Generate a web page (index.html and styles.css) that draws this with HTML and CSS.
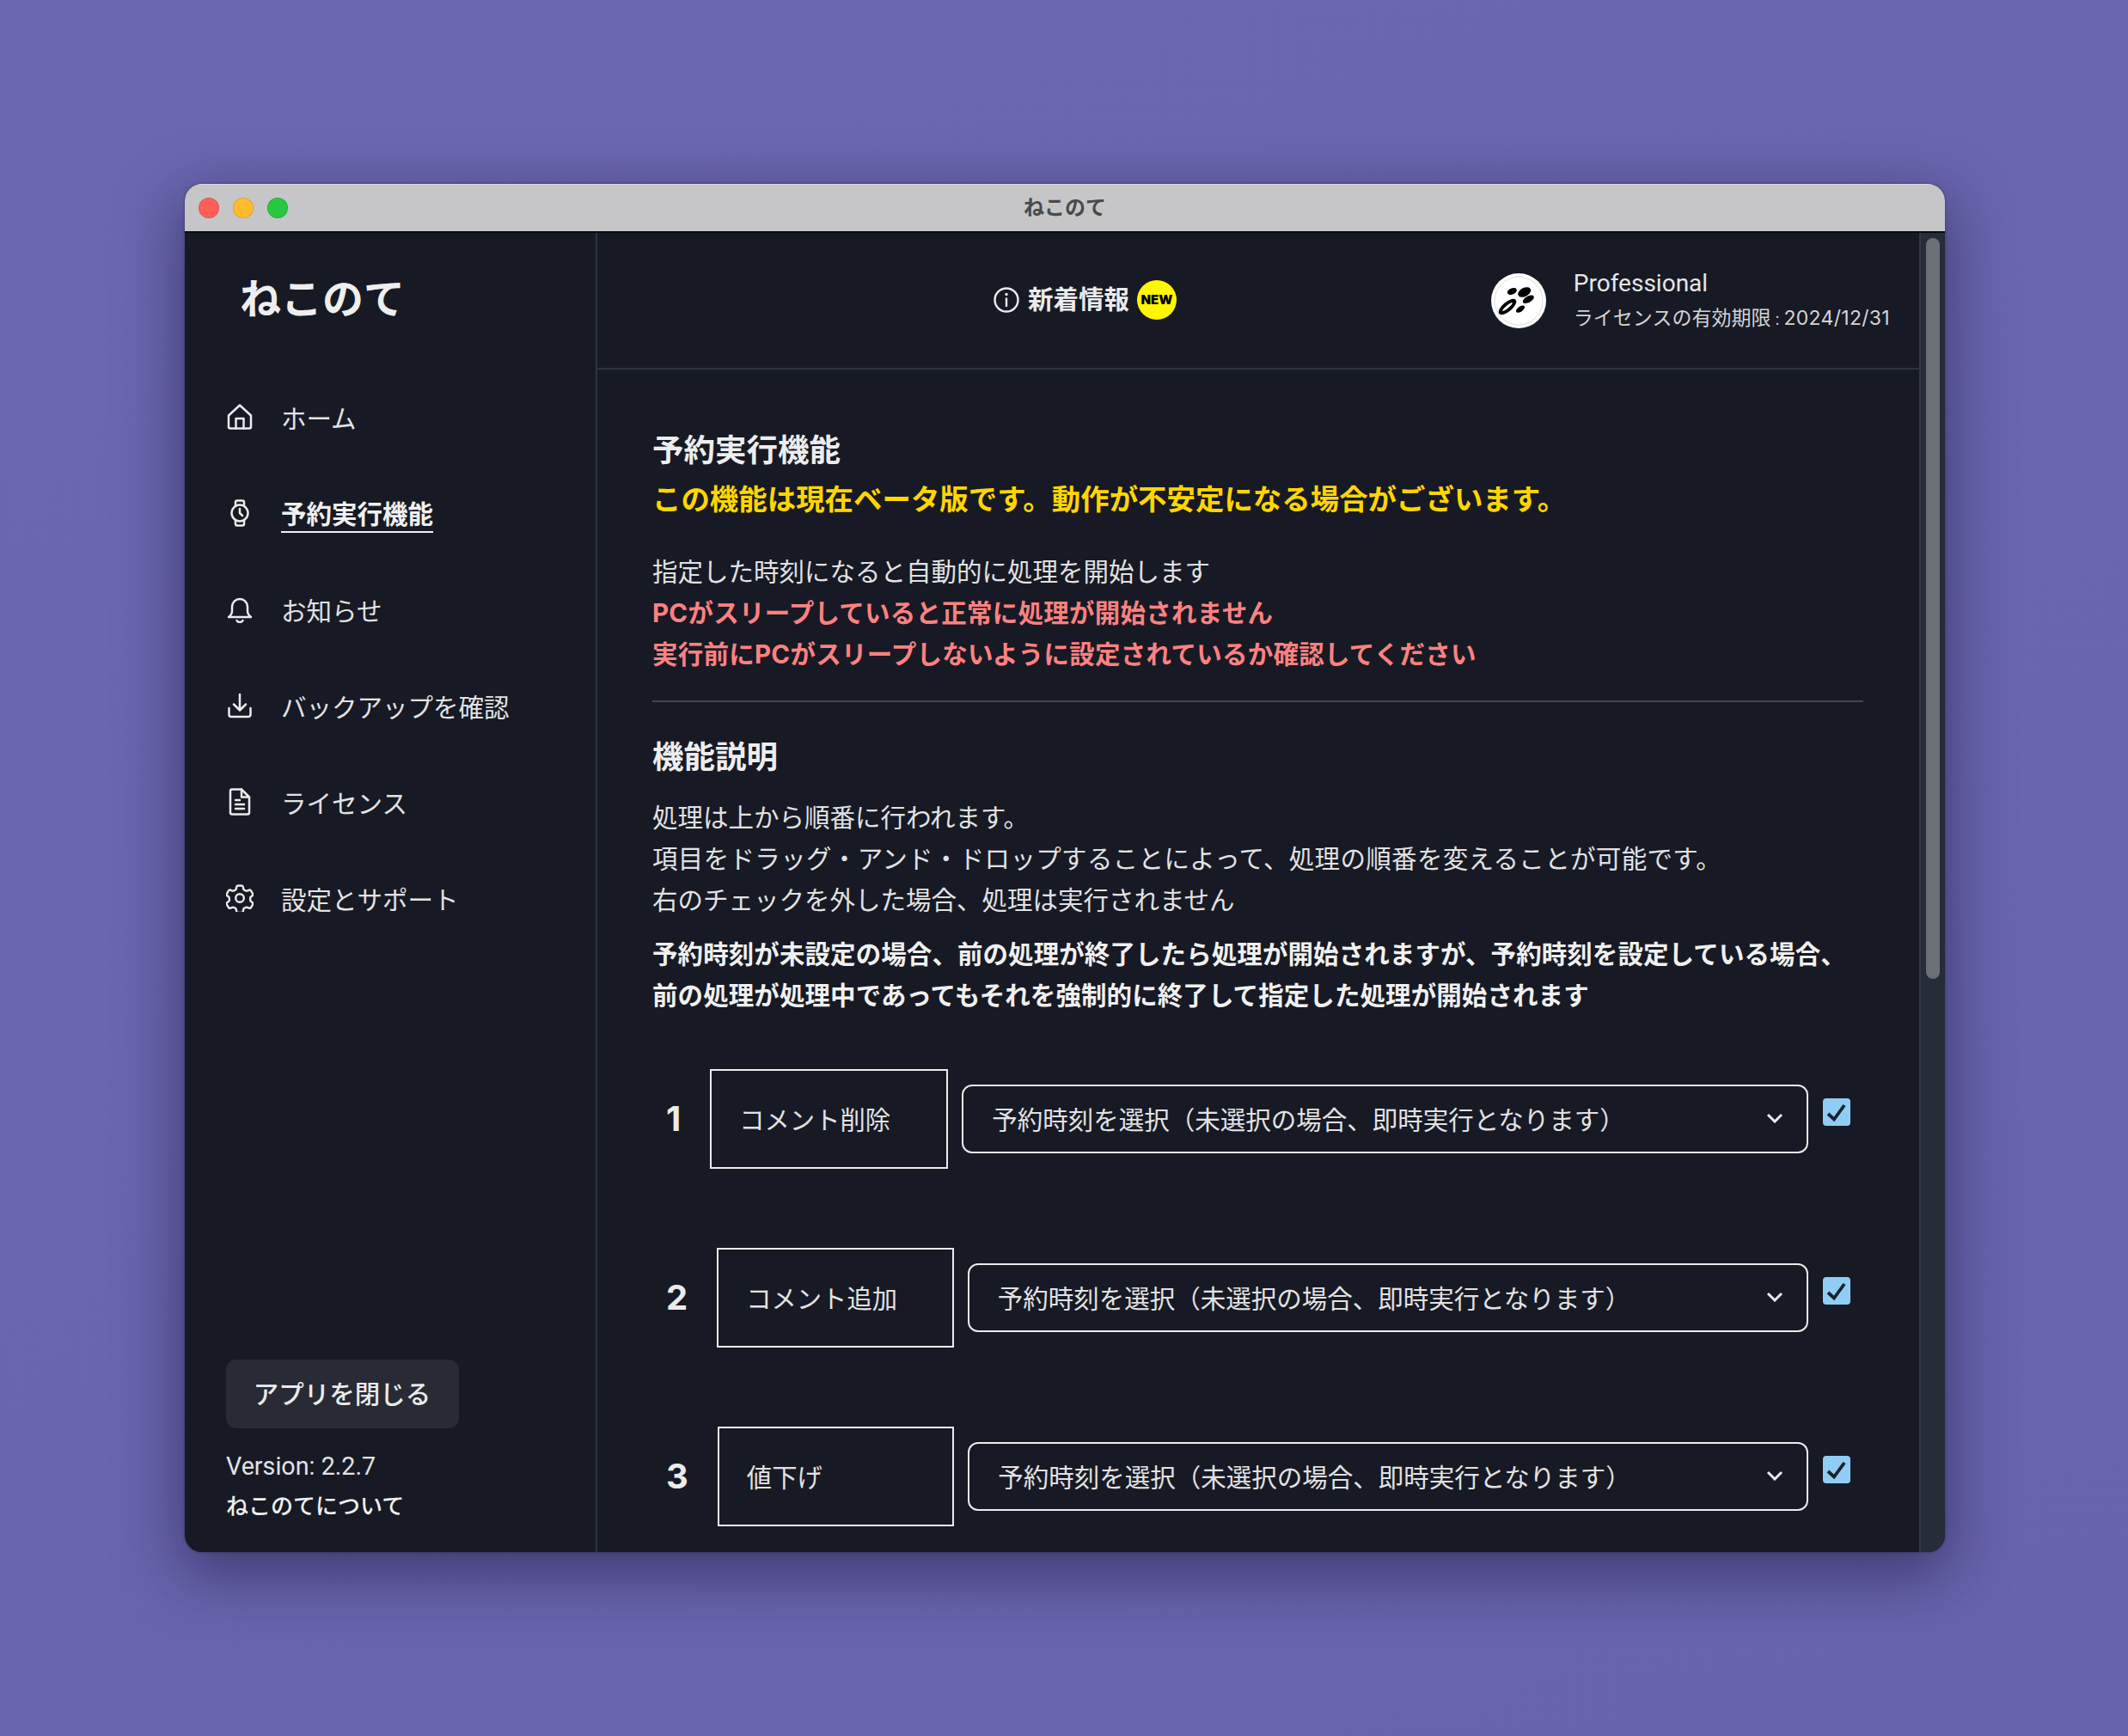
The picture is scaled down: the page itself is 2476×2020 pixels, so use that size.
FILE: index.html
```html
<!DOCTYPE html>
<html lang="ja">
<head>
<meta charset="utf-8">
<title>ねこのて</title>
<link rel="stylesheet" href="styles.css">
</head>
<body>
<div class="window">
  <header class="titlebar">
    <div class="lights"><span class="light red"></span><span class="light yellow"></span><span class="light green"></span></div>
    <div class="wintitle">ねこのて</div>
  </header>
  <div class="app">
    <aside class="sidebar">
      <div class="brand">ねこのて</div>
      <nav class="nav">
        <a class="navitem"><svg class="navicon" viewBox="0 0 32 32"><path d="M3 14.500 16 2.500 29 14.500v13a2 2 0 0 1-2 2H5a2 2 0 0 1-2-2z"/><path d="M11.500 29.500V18h9v11.500"/></svg><span>ホーム</span></a>
        <a class="navitem active"><svg class="navicon" viewBox="0 0 32 32"><circle cx="16" cy="16" r="9.500"/><path d="M11 7.500V3.500a2 2 0 0 1 2-2h6a2 2 0 0 1 2 2v4M11 24.500v4a2 2 0 0 0 2 2h6a2 2 0 0 0 2-2v-4M16 11v5l3 3"/></svg><span class="navtext">予約実行機能</span></a>
        <a class="navitem"><svg class="navicon" viewBox="0 0 32 32"><path d="M3 25c2-1.500 4-4 4-7v-5a9 9 0 0 1 18 0v5c0 3 2 5.500 4 7z"/><path d="M12.500 29a4 4 0 0 0 7 0"/></svg><span>お知らせ</span></a>
        <a class="navitem"><svg class="navicon" viewBox="0 0 32 32"><path d="M3.500 19v7.500a2.500 2.500 0 0 0 2.500 2.500h20a2.500 2.500 0 0 0 2.500-2.500V19M16 3v18M9 14.500l7 7 7-7"/></svg><span>バックアップを確認</span></a>
        <a class="navitem"><svg class="navicon" viewBox="0 0 32 32"><path d="M5 3.500a2 2 0 0 1 2-2h11l9 9v18a2 2 0 0 1-2 2H7a2 2 0 0 1-2-2z"/><path d="M18 1.500v9h9M11 14h5M11 19h10M11 24h10"/></svg><span>ライセンス</span></a>
        <a class="navitem"><svg class="navicon gear" viewBox="2 2 20 20"><path d="M9.600 3.900c.1-.6.600-1 1.200-1h2.400c.6 0 1.100.4 1.200 1l.2 1.300c.1.400.4.800.8 1l.8.400c.4.200.9.200 1.300.1l1.200-.5c.6-.2 1.200 0 1.500.5l1.200 2.100c.3.500.2 1.200-.3 1.500l-1 .8c-.4.300-.6.700-.5 1.200v.9c0 .4.100.9.500 1.200l1 .8c.5.300.6 1 .3 1.500l-1.200 2.100c-.3.500-.9.700-1.500.5l-1.200-.5c-.4-.1-.9-.1-1.300.1l-.8.400c-.4.200-.7.600-.8 1l-.2 1.300c-.1.600-.6 1-1.200 1h-2.400c-.6 0-1.100-.4-1.200-1l-.2-1.300c-.1-.4-.4-.8-.8-1l-.8-.4c-.4-.2-.9-.2-1.300-.1l-1.200.5c-.6.200-1.200 0-1.500-.5l-1.200-2.100c-.3-.5-.2-1.200.3-1.500l1-.8c.4-.3.600-.8.500-1.200v-.9c0-.5-.1-.9-.5-1.200l-1-.8c-.5-.3-.6-1-.3-1.500l1.200-2.100c.3-.5.900-.7 1.500-.5l1.200.5c.4.100.9.100 1.300-.1l.8-.4c.4-.2.700-.6.800-1z"/><circle cx="12" cy="12" r="3"/></svg><span>設定とサポート</span></a>
      </nav>
      <div class="sidefoot">
        <button class="closebtn">アプリを閉じる</button>
        <div class="version">Version: 2.2.7</div>
        <div class="about">ねこのてについて</div>
      </div>
    </aside>
    <main class="main">
      <div class="pane">
        <div class="topbar">
          <div class="news">
            <svg class="infoicon" viewBox="0 0 30 30"><circle cx="15" cy="15" r="13.500"/><path d="M15 13.500V22"/><circle class="dot" cx="15" cy="8.500" r="1.700"/></svg>
            <span class="newstext">新着情報</span>
            <span class="newbadge">NEW</span>
          </div>
          <div class="plan">
            <svg class="logo" viewBox="0 0 64 64"><circle class="logobg" cx="32" cy="32" r="32"/><circle class="logoring" cx="32" cy="32" r="28"/><g class="seeds"><ellipse cx="38.700" cy="22" rx="8" ry="5" transform="rotate(-28 38.700 22)"/><ellipse cx="24.300" cy="21" rx="5.800" ry="3.600" transform="rotate(-22 24.300 21)"/><ellipse cx="43.300" cy="30.300" rx="7.200" ry="3.600" transform="rotate(-30 43.300 30.300)"/><ellipse cx="19" cy="39" rx="12.500" ry="5.600" transform="rotate(-40 19 39)"/><ellipse cx="34" cy="41.700" rx="5.800" ry="3" transform="rotate(-35 34 41.700)"/></g><ellipse class="logobg" cx="19" cy="39" rx="7.500" ry="1.500" transform="rotate(-40 19 39)"/></svg>
            <div class="plantext">
              <div class="planname">Professional</div>
              <div class="planexp">ライセンスの有効期限<span class="colon">：</span><span class="date">2024/12/31</span></div>
            </div>
          </div>
        </div>
        <div class="content">
          <h1 class="h1">予約実行機能</h1>
          <p class="beta">この機能は現在ベータ版です。動作が不安定になる場合がございます。</p>
          <div class="intro">
            <p class="line">指定した時刻になると自動的に処理を開始します</p>
            <p class="line warn">PCがスリープしていると正常に処理が開始されません</p>
            <p class="line warn">実行前にPCがスリープしないように設定されているか確認してください</p>
          </div>
          <hr class="rule">
          <h2 class="h2">機能説明</h2>
          <div class="desc">
            <p class="line">処理は上から順番に行われます。</p>
            <p class="line wide">項目をドラッグ・アンド・ドロップすることによって、処理の順番を変えることが可能です。</p>
            <p class="line">右のチェックを外した場合、処理は実行されません</p>
          </div>
          <div class="strong">
            <p class="line">予約時刻が未設定の場合、前の処理が終了したら処理が開始されますが、予約時刻を設定している場合、</p>
            <p class="line">前の処理が処理中であってもそれを強制的に終了して指定した処理が開始されます</p>
          </div>
          <div class="rows">
            <div class="row">
              <span class="num">1</span>
              <div class="task">コメント削除</div>
              <div class="select"><span>予約時刻を選択（未選択の場合、即時実行となります）</span><svg class="chev" viewBox="0 0 20 12"><path d="M2 2l8 8 8-8"/></svg></div>
              <span class="check"><svg viewBox="0 0 32 32"><path d="M6 18l7 6.500L25 8"/></svg></span>
            </div>
            <div class="row">
              <span class="num">2</span>
              <div class="task">コメント追加</div>
              <div class="select"><span>予約時刻を選択（未選択の場合、即時実行となります）</span><svg class="chev" viewBox="0 0 20 12"><path d="M2 2l8 8 8-8"/></svg></div>
              <span class="check"><svg viewBox="0 0 32 32"><path d="M6 18l7 6.500L25 8"/></svg></span>
            </div>
            <div class="row">
              <span class="num">3</span>
              <div class="task">値下げ</div>
              <div class="select"><span>予約時刻を選択（未選択の場合、即時実行となります）</span><svg class="chev" viewBox="0 0 20 12"><path d="M2 2l8 8 8-8"/></svg></div>
              <span class="check"><svg viewBox="0 0 32 32"><path d="M6 18l7 6.500L25 8"/></svg></span>
            </div>
          </div>
        </div>
      </div>
      <div class="scrollbar"><div class="thumb"></div></div>
    </main>
  </div>
</div>
</body>
</html>
```
FILE: styles.css
```css
* { box-sizing: border-box; }
html, body { margin: 0; height: 100%; }
body {
  background: linear-gradient(160deg, #6b67b1, #6763ad);
  font-family: Inter, "Noto Sans CJK JP", sans-serif;
  color: #ebebec;
  padding: 214px 213px 214px 215px;
  overflow: hidden;
}
p, h1, h2 { margin: 0; }

.window {
  width: 2048px;
  height: 1592px;
  border-radius: 20px;
  overflow: hidden;
  display: flex;
  flex-direction: column;
  background: #171a24;
  box-shadow: 0 22px 70px 4px rgba(20, 18, 50, .5), 0 0 3px rgba(30, 28, 70, .5);
}
.titlebar {
  flex: none;
  height: 57px;
  background: #c6c6c8;
  border-bottom: 2px solid #0a0b0f;
  border-top: 1px solid #dcdcdd;
  display: grid;
  grid-template-columns: 1fr auto 1fr;
  align-items: center;
}
.lights { display: flex; gap: 16px; padding-left: 16px; }
.light { width: 24px; height: 24px; border-radius: 50%; border: 1px solid rgba(0, 0, 0, .12); }
.red { background: #ff5f57; }
.yellow { background: #febc2e; }
.green { background: #28c840; }
.wintitle {
  grid-column: 2;
  font-size: 24px;
  font-weight: 700;
  color: #4a4a4c;
  line-height: 1;
}

.app { flex: 1; display: flex; min-height: 0; }

.sidebar {
  flex: none;
  width: 480px;
  border-right: 2px solid #2c3344;
  padding: 0 0 0 48px;
  display: flex;
  flex-direction: column;
}
.brand {
  font-size: 48px;
  font-weight: 700;
  line-height: 72px;
  padding: 41px 0 0 16px;
  color: #eeeeee;
}
.nav { display: flex; flex-direction: column; gap: 56px; margin-top: 73px; }
.navitem { display: flex; align-items: center; gap: 32px; height: 56px; font-size: 29.500px; color: #e2e2e4; }
.navicon { width: 32px; height: 32px; flex: none; fill: none; stroke: #ebebec; stroke-width: 2.500; stroke-linecap: round; stroke-linejoin: round; }
.gear { stroke-width: 1.500; }
.active { font-weight: 700; color: #f0f0f0; }
.navtext { border-bottom: 2px solid #f0f0f0; line-height: 40px; height: 42px; margin-top: 4px; }
.sidefoot { margin-top: auto; padding-bottom: 31px; }
.closebtn {
  display: block;
  width: 271px;
  height: 80px;
  border: 0;
  border-radius: 12px;
  background: #282b35;
  color: #ebebec;
  font: 500 29.500px Inter, "Noto Sans CJK JP", sans-serif;
  padding: 0 1px 5px 0;
}
.version { margin-top: 22px; font-size: 28.700px; line-height: 44px; color: #e2e2e4; font-family: Roboto, "Noto Sans CJK JP", sans-serif; }
.about { margin-top: 3px; font-size: 26px; line-height: 44px; font-weight: 500; color: #f0f0f0; }

.main { flex: 1; display: flex; min-width: 0; }
.pane { flex: 1; min-width: 0; overflow: hidden; }
.topbar {
  height: 159px;
  border-bottom: 2px solid #2c3344;
  display: flex;
  align-items: center;
  padding: 0 34px 0 461px;
}
.news { display: flex; align-items: center; padding-bottom: 2px; }
.infoicon { width: 30px; height: 30px; flex: none; fill: none; stroke: #ebebec; stroke-width: 2.400; stroke-linecap: round; }
.dot { fill: #ebebec; stroke: none; }
.newstext { margin: 0 0 6px 10px; font-size: 29.500px; font-weight: 700; }
.newbadge {
  margin-left: 9px;
  width: 46px; height: 46px;
  border-radius: 50%;
  background: #fff700;
  color: #000;
  font-size: 15px;
  font-weight: 900;
  display: flex;
  align-items: center;
  justify-content: center;
}
.plan { margin-left: auto; display: flex; align-items: center; gap: 32px; }
.logo { width: 64px; height: 64px; flex: none; }
.logobg { fill: #fff; }
.logoring { fill: none; stroke: #b8b8b8; stroke-width: .5; }
.seeds { fill: #000; }
.planname { font-size: 28px; line-height: 42px; font-family: Roboto, sans-serif; color: #e6e6e8; }
.planexp { font-size: 23px; line-height: 36px; color: #d4d4d6; margin-top: 1px; white-space: nowrap; }
.colon { font-size: 15px; }
.date { letter-spacing: .3px; }

.content { padding: 66px 65px 0 64px; }
.h1 { font-size: 36.500px; font-weight: 700; line-height: 56px; color: #ededee; }
.h2 { font-size: 36.500px; font-weight: 700; line-height: 56px; color: #ededee; margin-top: 36px; }
.beta { font-size: 33.450px; font-weight: 700; line-height: 56px; color: #ffd600; margin-top: 1px; }
.line { font-size: 29.500px; line-height: 48px; white-space: nowrap; }
.wide { letter-spacing: .33px; }
.intro { margin-top: 32px; color: #e2e2e4; }
.warn { color: #fc8181; font-weight: 700; letter-spacing: .25px; }
.rule { margin: 30px 0 0; border: 0; height: 2px; background: #44464e; }
.desc { margin-top: 18px; color: #e2e2e4; }
.strong { margin-top: 15px; font-weight: 700; color: #f0f0f0; letter-spacing: .08px; }
.rows { margin-top: 62px; display: flex; flex-direction: column; gap: 92px; }
.row { display: flex; align-items: center; padding-left: 16px; }
.num { font-size: 40px; font-weight: 700; line-height: 48px; margin-right: 34px; color: #ebebec; }
.task {
  flex: 0 1 277px;
  height: 116px;
  border: 2px solid #ebebec;
  padding: 0 32px 3px;
  display: flex;
  align-items: center;
  font-size: 29.300px;
  color: #e2e2e4;
}
.select {
  flex: 0 1 985px;
  min-width: 0;
  height: 80px;
  margin-left: 16px;
  border: 2px solid #ebebec;
  border-radius: 12px;
  padding: 0 27px 3px 33px;
  display: flex;
  align-items: center;
  justify-content: space-between;
  font-size: 29.500px;
  color: #e2e2e4;
  white-space: nowrap;
}
.chev { width: 20px; height: 12px; fill: none; stroke: #ebebec; stroke-width: 3; }
.check {
  flex: none;
  width: 32px; height: 32px;
  margin: 0 15px 16px 17px;
  border-radius: 4px;
  background: #90cdf4;
  display: block;
}
.check svg { display: block; width: 32px; height: 32px; fill: none; stroke: #1a202c; stroke-width: 3.800; }

.scrollbar {
  flex: none;
  width: 30px;
  background: #262c38;
  border-left: 2px solid #333844;
  padding: 6px 6px 0 6px;
}
.thumb { width: 16px; height: 862px; border-radius: 8px; background: #6b7078; }
```
